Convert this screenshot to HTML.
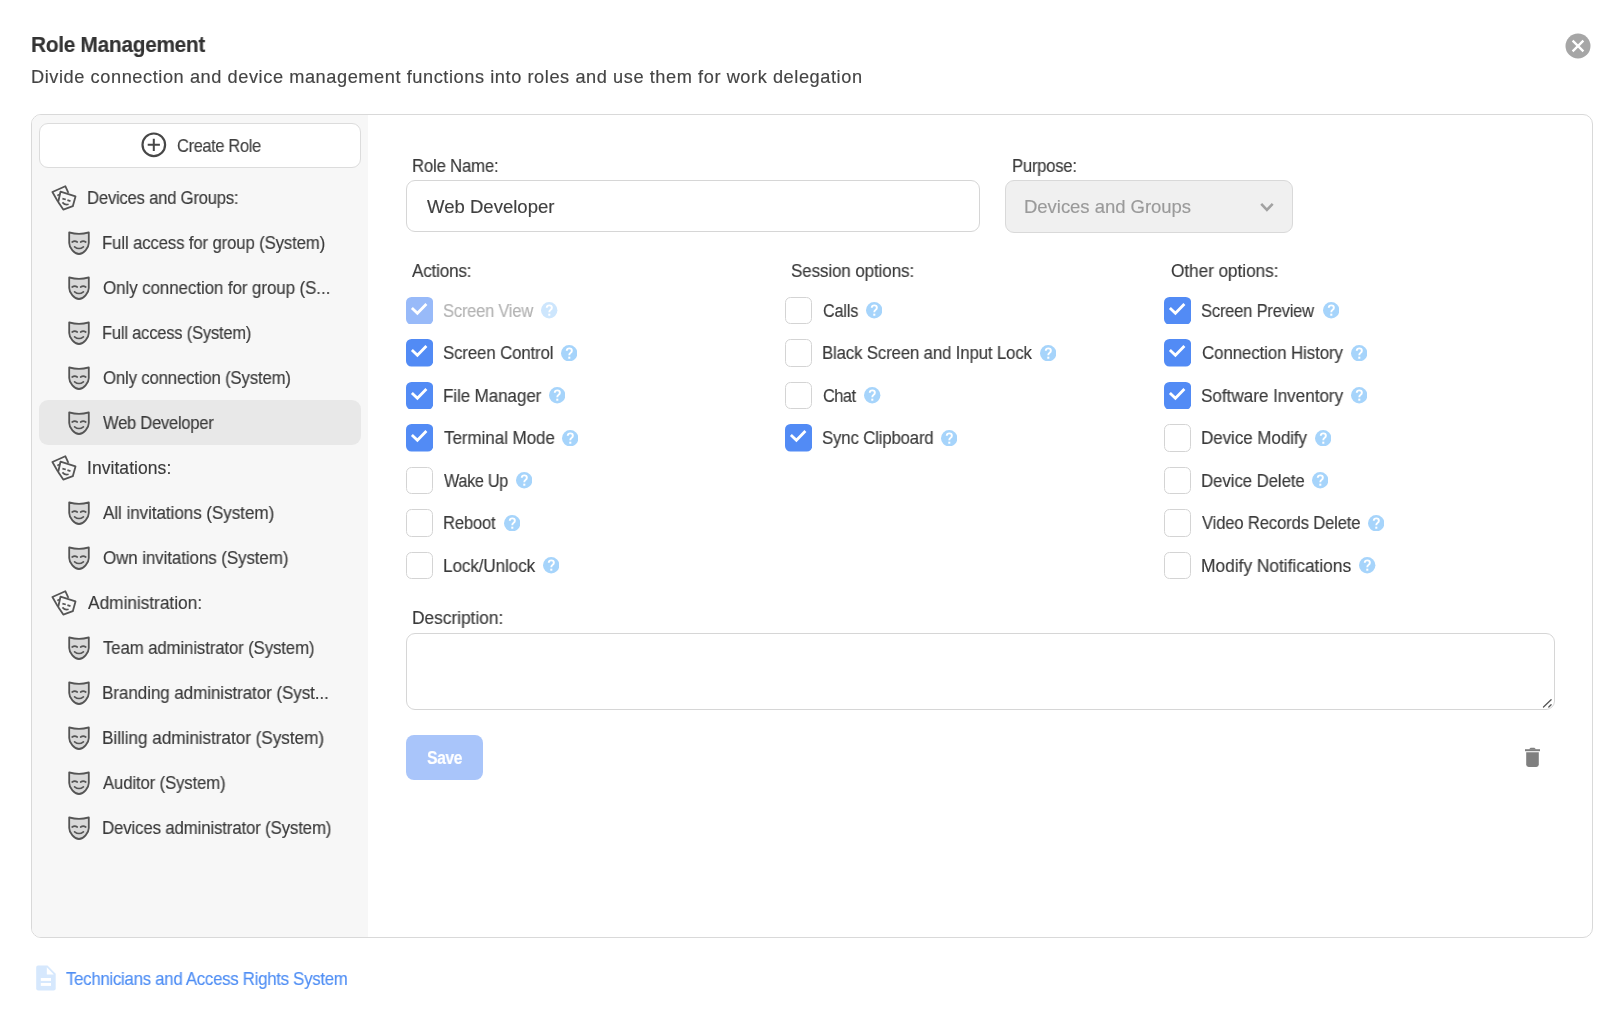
<!DOCTYPE html>
<html><head><meta charset='utf-8'><style>
html,body{margin:0;padding:0;background:#fff;width:1624px;height:1024px;overflow:hidden;position:relative;font-family:"Liberation Sans", sans-serif;}
.t{position:absolute;white-space:pre;will-change:transform;transform-origin:0 0;-webkit-text-stroke:0.15px currentColor;font-family:"Liberation Sans", sans-serif;}
.ic{position:absolute;display:block;}
.box{position:absolute;left:31px;top:114px;width:1560px;height:822px;border:1px solid #d9d9d9;border-radius:10px;overflow:hidden;background:#fff;}
.side{position:absolute;left:0;top:0;width:336px;height:822px;background:#f7f7f7;}
.create{position:absolute;left:39px;top:123px;width:320px;height:43px;border:1px solid #dcdcdc;border-radius:9px;background:#fff;}
.sel{position:absolute;left:39px;top:400px;width:322px;height:44.5px;border-radius:9px;background:#e8e8e8;}
.inp{position:absolute;left:406px;top:180px;width:572px;height:50px;border:1px solid #d6d6d6;border-radius:9px;background:#fff;}
.select{position:absolute;left:1005px;top:180px;width:286px;height:51px;border:1px solid #d9d9d9;border-radius:9px;background:#f0f0f0;}
.cb{position:absolute;width:25px;height:25.5px;border:1px solid #d4d4d4;border-radius:5.5px;background:#fff;}
.ta{position:absolute;left:406px;top:633px;width:1147px;height:75px;border:1px solid #d6d6d6;border-radius:9px;background:#fff;}
.save{position:absolute;left:406px;top:735px;width:77px;height:44.5px;border-radius:8px;background:#a9c5fa;}
</style></head><body>
<div class='box'><div class='side'></div></div>
<div class='create'></div>
<div class='sel'></div>
<div class='inp'></div>
<div class='select'></div>
<div class='ta'></div>
<div class='save'></div>
<svg class='ic' style='left:1565px;top:33px' width='26' height='26' viewBox='0 0 26 26'><circle cx='13' cy='13' r='12.5' fill='#a6a6a6'/><path d='M7.6,7.6 L18.4,18.4 M18.4,7.6 L7.6,18.4' stroke='#fff' stroke-width='2.3'/></svg>
<svg class='ic' style='left:141.2px;top:131.85px' width='26' height='26' viewBox='0 0 26 26'><circle cx='12.8' cy='12.8' r='11.3' fill='none' stroke='#474747' stroke-width='2.2'/><path d='M12.8,6.7 V18.9 M6.7,12.8 H18.9' stroke='#474747' stroke-width='2.0'/></svg>
<svg class='ic' style='left:1258px;top:200px' width='18' height='14' viewBox='0 0 18 14'><path d='M3.2,3.9 L8.9,9.9 L14.7,3.9' fill='none' stroke='#a2a2a2' stroke-width='2.6'/></svg>
<svg class='ic' style='left:1539px;top:697px' width='14' height='12' viewBox='0 0 14 12'><path d='M4.5,10 L12.1,2.8 M9.8,10 L12.1,7.8' stroke='#555' stroke-width='1.3' stroke-linecap='round'/></svg>
<svg class='ic' style='left:1524px;top:747px' width='17' height='21' viewBox='0 0 17 21'><rect x='1' y='2.2' width='15' height='2' fill='#7f7f7f'/><path d='M4.8,2.6 L6.6,0.8 H10.4 L12.2,2.6 Z' fill='#7f7f7f'/><path d='M2.2,5.2 H14.8 V17.6 Q14.8,20 12.4,20 H4.6 Q2.2,20 2.2,17.6 Z' fill='#7f7f7f'/></svg>
<svg class='ic' style='left:36px;top:965px' width='20' height='26' viewBox='0 0 20 26'><path d='M2,0.5 H11.5 L19.7,8.7 V23.5 Q19.7,25.5 17.7,25.5 H2.2 Q0.2,25.5 0.2,23.5 V2.5 Q0.2,0.5 2,0.5 Z' fill='#d6e8fd'/><path d='M10.8,2.3 V9.5 H17.8 Z' fill='#fff'/><rect x='4.8' y='13' width='10.2' height='2.9' fill='#fff'/><rect x='4.8' y='18' width='10.2' height='2.9' fill='#fff'/></svg>
<svg class='ic' style='left:0px;top:0.0px' width='90' height='220' viewBox='0 0 90 220'><path d='M57.9,201.6 L52.4,192 L65.3,186.2 L68.4,192.8' fill='none' stroke='#555' stroke-width='1.8' stroke-linejoin='round'/><path d='M57.3,195.6 L60.3,194.3' fill='none' stroke='#555' stroke-width='1.6'/><path d='M60.5,191.7 L75.5,196.4 L72.8,206.2 L63.3,209.6 L58.2,202 Z' fill='#f7f7f7' stroke='#555' stroke-width='1.8' stroke-linejoin='round'/><path d='M62.4,198.6 L65.8,199.5 M67.4,200.1 L70.5,201.1 M62.4,202.4 Q65.2,205.6 68.6,204.3' fill='none' stroke='#555' stroke-width='1.7'/></svg><svg class='ic' style='left:68px;top:231.0px' width='22' height='24' viewBox='0 0 22 24'><path d='M1.2,1.3 Q11,4.3 20.8,1.3 L20.8,12 C20.8,17 15.5,23 11,23 C6.5,23 1.2,17 1.2,12 Z' fill='#d9d9d9' stroke='#555' stroke-width='1.8' stroke-linejoin='round'/><path d='M4.2,11.0 Q6.7,9.4 9.2,11.0 M12.7,11.0 Q15.2,9.4 17.7,11.0 M6.6,15.8 Q11,19.2 15.4,15.8' fill='none' stroke='#555' stroke-width='1.7' stroke-linecap='round'/></svg><svg class='ic' style='left:68px;top:276.0px' width='22' height='24' viewBox='0 0 22 24'><path d='M1.2,1.3 Q11,4.3 20.8,1.3 L20.8,12 C20.8,17 15.5,23 11,23 C6.5,23 1.2,17 1.2,12 Z' fill='#d9d9d9' stroke='#555' stroke-width='1.8' stroke-linejoin='round'/><path d='M4.2,11.0 Q6.7,9.4 9.2,11.0 M12.7,11.0 Q15.2,9.4 17.7,11.0 M6.6,15.8 Q11,19.2 15.4,15.8' fill='none' stroke='#555' stroke-width='1.7' stroke-linecap='round'/></svg><svg class='ic' style='left:68px;top:321.0px' width='22' height='24' viewBox='0 0 22 24'><path d='M1.2,1.3 Q11,4.3 20.8,1.3 L20.8,12 C20.8,17 15.5,23 11,23 C6.5,23 1.2,17 1.2,12 Z' fill='#d9d9d9' stroke='#555' stroke-width='1.8' stroke-linejoin='round'/><path d='M4.2,11.0 Q6.7,9.4 9.2,11.0 M12.7,11.0 Q15.2,9.4 17.7,11.0 M6.6,15.8 Q11,19.2 15.4,15.8' fill='none' stroke='#555' stroke-width='1.7' stroke-linecap='round'/></svg><svg class='ic' style='left:68px;top:366.0px' width='22' height='24' viewBox='0 0 22 24'><path d='M1.2,1.3 Q11,4.3 20.8,1.3 L20.8,12 C20.8,17 15.5,23 11,23 C6.5,23 1.2,17 1.2,12 Z' fill='#d9d9d9' stroke='#555' stroke-width='1.8' stroke-linejoin='round'/><path d='M4.2,11.0 Q6.7,9.4 9.2,11.0 M12.7,11.0 Q15.2,9.4 17.7,11.0 M6.6,15.8 Q11,19.2 15.4,15.8' fill='none' stroke='#555' stroke-width='1.7' stroke-linecap='round'/></svg><svg class='ic' style='left:68px;top:411.0px' width='22' height='24' viewBox='0 0 22 24'><path d='M1.2,1.3 Q11,4.3 20.8,1.3 L20.8,12 C20.8,17 15.5,23 11,23 C6.5,23 1.2,17 1.2,12 Z' fill='#d9d9d9' stroke='#555' stroke-width='1.8' stroke-linejoin='round'/><path d='M4.2,11.0 Q6.7,9.4 9.2,11.0 M12.7,11.0 Q15.2,9.4 17.7,11.0 M6.6,15.8 Q11,19.2 15.4,15.8' fill='none' stroke='#555' stroke-width='1.7' stroke-linecap='round'/></svg><svg class='ic' style='left:0px;top:270.0px' width='90' height='220' viewBox='0 0 90 220'><path d='M57.9,201.6 L52.4,192 L65.3,186.2 L68.4,192.8' fill='none' stroke='#555' stroke-width='1.8' stroke-linejoin='round'/><path d='M57.3,195.6 L60.3,194.3' fill='none' stroke='#555' stroke-width='1.6'/><path d='M60.5,191.7 L75.5,196.4 L72.8,206.2 L63.3,209.6 L58.2,202 Z' fill='#f7f7f7' stroke='#555' stroke-width='1.8' stroke-linejoin='round'/><path d='M62.4,198.6 L65.8,199.5 M67.4,200.1 L70.5,201.1 M62.4,202.4 Q65.2,205.6 68.6,204.3' fill='none' stroke='#555' stroke-width='1.7'/></svg><svg class='ic' style='left:68px;top:501.0px' width='22' height='24' viewBox='0 0 22 24'><path d='M1.2,1.3 Q11,4.3 20.8,1.3 L20.8,12 C20.8,17 15.5,23 11,23 C6.5,23 1.2,17 1.2,12 Z' fill='#d9d9d9' stroke='#555' stroke-width='1.8' stroke-linejoin='round'/><path d='M4.2,11.0 Q6.7,9.4 9.2,11.0 M12.7,11.0 Q15.2,9.4 17.7,11.0 M6.6,15.8 Q11,19.2 15.4,15.8' fill='none' stroke='#555' stroke-width='1.7' stroke-linecap='round'/></svg><svg class='ic' style='left:68px;top:546.0px' width='22' height='24' viewBox='0 0 22 24'><path d='M1.2,1.3 Q11,4.3 20.8,1.3 L20.8,12 C20.8,17 15.5,23 11,23 C6.5,23 1.2,17 1.2,12 Z' fill='#d9d9d9' stroke='#555' stroke-width='1.8' stroke-linejoin='round'/><path d='M4.2,11.0 Q6.7,9.4 9.2,11.0 M12.7,11.0 Q15.2,9.4 17.7,11.0 M6.6,15.8 Q11,19.2 15.4,15.8' fill='none' stroke='#555' stroke-width='1.7' stroke-linecap='round'/></svg><svg class='ic' style='left:0px;top:405.0px' width='90' height='220' viewBox='0 0 90 220'><path d='M57.9,201.6 L52.4,192 L65.3,186.2 L68.4,192.8' fill='none' stroke='#555' stroke-width='1.8' stroke-linejoin='round'/><path d='M57.3,195.6 L60.3,194.3' fill='none' stroke='#555' stroke-width='1.6'/><path d='M60.5,191.7 L75.5,196.4 L72.8,206.2 L63.3,209.6 L58.2,202 Z' fill='#f7f7f7' stroke='#555' stroke-width='1.8' stroke-linejoin='round'/><path d='M62.4,198.6 L65.8,199.5 M67.4,200.1 L70.5,201.1 M62.4,202.4 Q65.2,205.6 68.6,204.3' fill='none' stroke='#555' stroke-width='1.7'/></svg><svg class='ic' style='left:68px;top:636.0px' width='22' height='24' viewBox='0 0 22 24'><path d='M1.2,1.3 Q11,4.3 20.8,1.3 L20.8,12 C20.8,17 15.5,23 11,23 C6.5,23 1.2,17 1.2,12 Z' fill='#d9d9d9' stroke='#555' stroke-width='1.8' stroke-linejoin='round'/><path d='M4.2,11.0 Q6.7,9.4 9.2,11.0 M12.7,11.0 Q15.2,9.4 17.7,11.0 M6.6,15.8 Q11,19.2 15.4,15.8' fill='none' stroke='#555' stroke-width='1.7' stroke-linecap='round'/></svg><svg class='ic' style='left:68px;top:681.0px' width='22' height='24' viewBox='0 0 22 24'><path d='M1.2,1.3 Q11,4.3 20.8,1.3 L20.8,12 C20.8,17 15.5,23 11,23 C6.5,23 1.2,17 1.2,12 Z' fill='#d9d9d9' stroke='#555' stroke-width='1.8' stroke-linejoin='round'/><path d='M4.2,11.0 Q6.7,9.4 9.2,11.0 M12.7,11.0 Q15.2,9.4 17.7,11.0 M6.6,15.8 Q11,19.2 15.4,15.8' fill='none' stroke='#555' stroke-width='1.7' stroke-linecap='round'/></svg><svg class='ic' style='left:68px;top:726.0px' width='22' height='24' viewBox='0 0 22 24'><path d='M1.2,1.3 Q11,4.3 20.8,1.3 L20.8,12 C20.8,17 15.5,23 11,23 C6.5,23 1.2,17 1.2,12 Z' fill='#d9d9d9' stroke='#555' stroke-width='1.8' stroke-linejoin='round'/><path d='M4.2,11.0 Q6.7,9.4 9.2,11.0 M12.7,11.0 Q15.2,9.4 17.7,11.0 M6.6,15.8 Q11,19.2 15.4,15.8' fill='none' stroke='#555' stroke-width='1.7' stroke-linecap='round'/></svg><svg class='ic' style='left:68px;top:771.0px' width='22' height='24' viewBox='0 0 22 24'><path d='M1.2,1.3 Q11,4.3 20.8,1.3 L20.8,12 C20.8,17 15.5,23 11,23 C6.5,23 1.2,17 1.2,12 Z' fill='#d9d9d9' stroke='#555' stroke-width='1.8' stroke-linejoin='round'/><path d='M4.2,11.0 Q6.7,9.4 9.2,11.0 M12.7,11.0 Q15.2,9.4 17.7,11.0 M6.6,15.8 Q11,19.2 15.4,15.8' fill='none' stroke='#555' stroke-width='1.7' stroke-linecap='round'/></svg><svg class='ic' style='left:68px;top:816.0px' width='22' height='24' viewBox='0 0 22 24'><path d='M1.2,1.3 Q11,4.3 20.8,1.3 L20.8,12 C20.8,17 15.5,23 11,23 C6.5,23 1.2,17 1.2,12 Z' fill='#d9d9d9' stroke='#555' stroke-width='1.8' stroke-linejoin='round'/><path d='M4.2,11.0 Q6.7,9.4 9.2,11.0 M12.7,11.0 Q15.2,9.4 17.7,11.0 M6.6,15.8 Q11,19.2 15.4,15.8' fill='none' stroke='#555' stroke-width='1.7' stroke-linecap='round'/></svg>
<svg class='ic' style='left:406.2px;top:296.8px' width='27.3' height='27.5' viewBox='0 0 27.3 27.5'><rect x='0' y='0' width='27.3' height='27.5' rx='5.5' fill='#98baf9'/><path d='M5.9,11.0 L11.4,16.2 L20.4,7.1' fill='none' stroke='#fff' stroke-width='2.8' stroke-linecap='butt'/></svg><svg class='ic' style='left:406.2px;top:339.3px' width='27.3' height='27.5' viewBox='0 0 27.3 27.5'><rect x='0' y='0' width='27.3' height='27.5' rx='5.5' fill='#528bf5'/><path d='M5.9,11.0 L11.4,16.2 L20.4,7.1' fill='none' stroke='#fff' stroke-width='2.8' stroke-linecap='butt'/></svg><svg class='ic' style='left:406.2px;top:381.8px' width='27.3' height='27.5' viewBox='0 0 27.3 27.5'><rect x='0' y='0' width='27.3' height='27.5' rx='5.5' fill='#528bf5'/><path d='M5.9,11.0 L11.4,16.2 L20.4,7.1' fill='none' stroke='#fff' stroke-width='2.8' stroke-linecap='butt'/></svg><svg class='ic' style='left:406.2px;top:424.3px' width='27.3' height='27.5' viewBox='0 0 27.3 27.5'><rect x='0' y='0' width='27.3' height='27.5' rx='5.5' fill='#528bf5'/><path d='M5.9,11.0 L11.4,16.2 L20.4,7.1' fill='none' stroke='#fff' stroke-width='2.8' stroke-linecap='butt'/></svg><div class='cb' style='left:406.2px;top:466.8px'></div><div class='cb' style='left:406.2px;top:509.3px'></div><div class='cb' style='left:406.2px;top:551.8px'></div><div class='cb' style='left:785.2px;top:296.8px'></div><div class='cb' style='left:785.2px;top:339.3px'></div><div class='cb' style='left:785.2px;top:381.8px'></div><svg class='ic' style='left:785.2px;top:424.3px' width='27.3' height='27.5' viewBox='0 0 27.3 27.5'><rect x='0' y='0' width='27.3' height='27.5' rx='5.5' fill='#528bf5'/><path d='M5.9,11.0 L11.4,16.2 L20.4,7.1' fill='none' stroke='#fff' stroke-width='2.8' stroke-linecap='butt'/></svg><svg class='ic' style='left:1164.2px;top:296.8px' width='27.3' height='27.5' viewBox='0 0 27.3 27.5'><rect x='0' y='0' width='27.3' height='27.5' rx='5.5' fill='#528bf5'/><path d='M5.9,11.0 L11.4,16.2 L20.4,7.1' fill='none' stroke='#fff' stroke-width='2.8' stroke-linecap='butt'/></svg><svg class='ic' style='left:1164.2px;top:339.3px' width='27.3' height='27.5' viewBox='0 0 27.3 27.5'><rect x='0' y='0' width='27.3' height='27.5' rx='5.5' fill='#528bf5'/><path d='M5.9,11.0 L11.4,16.2 L20.4,7.1' fill='none' stroke='#fff' stroke-width='2.8' stroke-linecap='butt'/></svg><svg class='ic' style='left:1164.2px;top:381.8px' width='27.3' height='27.5' viewBox='0 0 27.3 27.5'><rect x='0' y='0' width='27.3' height='27.5' rx='5.5' fill='#528bf5'/><path d='M5.9,11.0 L11.4,16.2 L20.4,7.1' fill='none' stroke='#fff' stroke-width='2.8' stroke-linecap='butt'/></svg><div class='cb' style='left:1164.2px;top:424.3px'></div><div class='cb' style='left:1164.2px;top:466.8px'></div><div class='cb' style='left:1164.2px;top:509.3px'></div><div class='cb' style='left:1164.2px;top:551.8px'></div>
<svg class='ic' style='left:541.3px;top:302.2px' width='16.4' height='16.4' viewBox='0 0 16 16'><circle cx='8' cy='8' r='8' fill='#cde6fd'/><path d='M5.6,5.6 Q5.8,3.3 8.1,3.3 Q10.6,3.3 10.6,5.6 Q10.6,7 9.2,7.8 Q8.1,8.5 8.1,10' fill='none' stroke='#fff' stroke-width='1.9'/><rect x='7.1' y='11.4' width='2' height='2' fill='#fff'/></svg><svg class='ic' style='left:560.8px;top:344.7px' width='16.4' height='16.4' viewBox='0 0 16 16'><circle cx='8' cy='8' r='8' fill='#a6d4fb'/><path d='M5.6,5.6 Q5.8,3.3 8.1,3.3 Q10.6,3.3 10.6,5.6 Q10.6,7 9.2,7.8 Q8.1,8.5 8.1,10' fill='none' stroke='#fff' stroke-width='1.9'/><rect x='7.1' y='11.4' width='2' height='2' fill='#fff'/></svg><svg class='ic' style='left:548.8px;top:387.2px' width='16.4' height='16.4' viewBox='0 0 16 16'><circle cx='8' cy='8' r='8' fill='#a6d4fb'/><path d='M5.6,5.6 Q5.8,3.3 8.1,3.3 Q10.6,3.3 10.6,5.6 Q10.6,7 9.2,7.8 Q8.1,8.5 8.1,10' fill='none' stroke='#fff' stroke-width='1.9'/><rect x='7.1' y='11.4' width='2' height='2' fill='#fff'/></svg><svg class='ic' style='left:561.8px;top:429.7px' width='16.4' height='16.4' viewBox='0 0 16 16'><circle cx='8' cy='8' r='8' fill='#a6d4fb'/><path d='M5.6,5.6 Q5.8,3.3 8.1,3.3 Q10.6,3.3 10.6,5.6 Q10.6,7 9.2,7.8 Q8.1,8.5 8.1,10' fill='none' stroke='#fff' stroke-width='1.9'/><rect x='7.1' y='11.4' width='2' height='2' fill='#fff'/></svg><svg class='ic' style='left:515.5px;top:472.2px' width='16.4' height='16.4' viewBox='0 0 16 16'><circle cx='8' cy='8' r='8' fill='#a6d4fb'/><path d='M5.6,5.6 Q5.8,3.3 8.1,3.3 Q10.6,3.3 10.6,5.6 Q10.6,7 9.2,7.8 Q8.1,8.5 8.1,10' fill='none' stroke='#fff' stroke-width='1.9'/><rect x='7.1' y='11.4' width='2' height='2' fill='#fff'/></svg><svg class='ic' style='left:503.8px;top:514.7px' width='16.4' height='16.4' viewBox='0 0 16 16'><circle cx='8' cy='8' r='8' fill='#a6d4fb'/><path d='M5.6,5.6 Q5.8,3.3 8.1,3.3 Q10.6,3.3 10.6,5.6 Q10.6,7 9.2,7.8 Q8.1,8.5 8.1,10' fill='none' stroke='#fff' stroke-width='1.9'/><rect x='7.1' y='11.4' width='2' height='2' fill='#fff'/></svg><svg class='ic' style='left:542.8px;top:557.2px' width='16.4' height='16.4' viewBox='0 0 16 16'><circle cx='8' cy='8' r='8' fill='#a6d4fb'/><path d='M5.6,5.6 Q5.8,3.3 8.1,3.3 Q10.6,3.3 10.6,5.6 Q10.6,7 9.2,7.8 Q8.1,8.5 8.1,10' fill='none' stroke='#fff' stroke-width='1.9'/><rect x='7.1' y='11.4' width='2' height='2' fill='#fff'/></svg><svg class='ic' style='left:865.6px;top:302.2px' width='16.4' height='16.4' viewBox='0 0 16 16'><circle cx='8' cy='8' r='8' fill='#a6d4fb'/><path d='M5.6,5.6 Q5.8,3.3 8.1,3.3 Q10.6,3.3 10.6,5.6 Q10.6,7 9.2,7.8 Q8.1,8.5 8.1,10' fill='none' stroke='#fff' stroke-width='1.9'/><rect x='7.1' y='11.4' width='2' height='2' fill='#fff'/></svg><svg class='ic' style='left:1039.6px;top:344.7px' width='16.4' height='16.4' viewBox='0 0 16 16'><circle cx='8' cy='8' r='8' fill='#a6d4fb'/><path d='M5.6,5.6 Q5.8,3.3 8.1,3.3 Q10.6,3.3 10.6,5.6 Q10.6,7 9.2,7.8 Q8.1,8.5 8.1,10' fill='none' stroke='#fff' stroke-width='1.9'/><rect x='7.1' y='11.4' width='2' height='2' fill='#fff'/></svg><svg class='ic' style='left:864.3px;top:387.2px' width='16.4' height='16.4' viewBox='0 0 16 16'><circle cx='8' cy='8' r='8' fill='#a6d4fb'/><path d='M5.6,5.6 Q5.8,3.3 8.1,3.3 Q10.6,3.3 10.6,5.6 Q10.6,7 9.2,7.8 Q8.1,8.5 8.1,10' fill='none' stroke='#fff' stroke-width='1.9'/><rect x='7.1' y='11.4' width='2' height='2' fill='#fff'/></svg><svg class='ic' style='left:940.8px;top:429.7px' width='16.4' height='16.4' viewBox='0 0 16 16'><circle cx='8' cy='8' r='8' fill='#a6d4fb'/><path d='M5.6,5.6 Q5.8,3.3 8.1,3.3 Q10.6,3.3 10.6,5.6 Q10.6,7 9.2,7.8 Q8.1,8.5 8.1,10' fill='none' stroke='#fff' stroke-width='1.9'/><rect x='7.1' y='11.4' width='2' height='2' fill='#fff'/></svg><svg class='ic' style='left:1322.5px;top:302.2px' width='16.4' height='16.4' viewBox='0 0 16 16'><circle cx='8' cy='8' r='8' fill='#a6d4fb'/><path d='M5.6,5.6 Q5.8,3.3 8.1,3.3 Q10.6,3.3 10.6,5.6 Q10.6,7 9.2,7.8 Q8.1,8.5 8.1,10' fill='none' stroke='#fff' stroke-width='1.9'/><rect x='7.1' y='11.4' width='2' height='2' fill='#fff'/></svg><svg class='ic' style='left:1350.8px;top:344.7px' width='16.4' height='16.4' viewBox='0 0 16 16'><circle cx='8' cy='8' r='8' fill='#a6d4fb'/><path d='M5.6,5.6 Q5.8,3.3 8.1,3.3 Q10.6,3.3 10.6,5.6 Q10.6,7 9.2,7.8 Q8.1,8.5 8.1,10' fill='none' stroke='#fff' stroke-width='1.9'/><rect x='7.1' y='11.4' width='2' height='2' fill='#fff'/></svg><svg class='ic' style='left:1350.8px;top:387.2px' width='16.4' height='16.4' viewBox='0 0 16 16'><circle cx='8' cy='8' r='8' fill='#a6d4fb'/><path d='M5.6,5.6 Q5.8,3.3 8.1,3.3 Q10.6,3.3 10.6,5.6 Q10.6,7 9.2,7.8 Q8.1,8.5 8.1,10' fill='none' stroke='#fff' stroke-width='1.9'/><rect x='7.1' y='11.4' width='2' height='2' fill='#fff'/></svg><svg class='ic' style='left:1314.8px;top:429.7px' width='16.4' height='16.4' viewBox='0 0 16 16'><circle cx='8' cy='8' r='8' fill='#a6d4fb'/><path d='M5.6,5.6 Q5.8,3.3 8.1,3.3 Q10.6,3.3 10.6,5.6 Q10.6,7 9.2,7.8 Q8.1,8.5 8.1,10' fill='none' stroke='#fff' stroke-width='1.9'/><rect x='7.1' y='11.4' width='2' height='2' fill='#fff'/></svg><svg class='ic' style='left:1312.1px;top:472.2px' width='16.4' height='16.4' viewBox='0 0 16 16'><circle cx='8' cy='8' r='8' fill='#a6d4fb'/><path d='M5.6,5.6 Q5.8,3.3 8.1,3.3 Q10.6,3.3 10.6,5.6 Q10.6,7 9.2,7.8 Q8.1,8.5 8.1,10' fill='none' stroke='#fff' stroke-width='1.9'/><rect x='7.1' y='11.4' width='2' height='2' fill='#fff'/></svg><svg class='ic' style='left:1367.8px;top:514.7px' width='16.4' height='16.4' viewBox='0 0 16 16'><circle cx='8' cy='8' r='8' fill='#a6d4fb'/><path d='M5.6,5.6 Q5.8,3.3 8.1,3.3 Q10.6,3.3 10.6,5.6 Q10.6,7 9.2,7.8 Q8.1,8.5 8.1,10' fill='none' stroke='#fff' stroke-width='1.9'/><rect x='7.1' y='11.4' width='2' height='2' fill='#fff'/></svg><svg class='ic' style='left:1359.3px;top:557.2px' width='16.4' height='16.4' viewBox='0 0 16 16'><circle cx='8' cy='8' r='8' fill='#a6d4fb'/><path d='M5.6,5.6 Q5.8,3.3 8.1,3.3 Q10.6,3.3 10.6,5.6 Q10.6,7 9.2,7.8 Q8.1,8.5 8.1,10' fill='none' stroke='#fff' stroke-width='1.9'/><rect x='7.1' y='11.4' width='2' height='2' fill='#fff'/></svg>
<div class='t' style='left:30.50px;top:34.00px;font-size:22.2px;line-height:22.2px;font-weight:700;color:#333333;letter-spacing:-0.334px;transform:scaleX(0.9415)'>Role Management</div><div class='t' style='left:31.00px;top:68.00px;font-size:18.2px;line-height:18.2px;font-weight:400;color:#444444;letter-spacing:0.571px'>Divide connection and device management functions into roles and use them for work delegation</div><div class='t' style='left:176.50px;top:138.00px;font-size:17.7px;line-height:17.7px;font-weight:400;color:#404040;letter-spacing:-0.377px;transform:scaleX(0.9293)'>Create Role</div><div class='t' style='left:86.50px;top:190.00px;font-size:17.5px;line-height:17.5px;font-weight:400;color:#3a3a3a;letter-spacing:-0.233px;transform:scaleX(0.9522)'>Devices and Groups:</div><div class='t' style='left:101.50px;top:235.00px;font-size:17.5px;line-height:17.5px;font-weight:400;color:#3a3a3a;letter-spacing:-0.137px;transform:scaleX(0.9567)'>Full access for group (System)</div><div class='t' style='left:102.50px;top:280.00px;font-size:17.5px;line-height:17.5px;font-weight:400;color:#3a3a3a;letter-spacing:-0.103px;transform:scaleX(0.9703)'>Only connection for group (S...</div><div class='t' style='left:101.50px;top:325.00px;font-size:17.5px;line-height:17.5px;font-weight:400;color:#3a3a3a;letter-spacing:-0.196px;transform:scaleX(0.9413)'>Full access (System)</div><div class='t' style='left:102.50px;top:370.00px;font-size:17.5px;line-height:17.5px;font-weight:400;color:#3a3a3a;letter-spacing:-0.182px;transform:scaleX(0.9580)'>Only connection (System)</div><div class='t' style='left:102.50px;top:415.00px;font-size:17.5px;line-height:17.5px;font-weight:400;color:#3a3a3a;letter-spacing:-0.299px;transform:scaleX(0.9487)'>Web Developer</div><div class='t' style='left:86.50px;top:460.00px;font-size:17.5px;line-height:17.5px;font-weight:400;color:#3a3a3a;letter-spacing:0.055px'>Invitations:</div><div class='t' style='left:102.50px;top:505.00px;font-size:17.5px;line-height:17.5px;font-weight:400;color:#3a3a3a;letter-spacing:-0.106px;transform:scaleX(0.9809)'>All invitations (System)</div><div class='t' style='left:102.50px;top:550.00px;font-size:17.5px;line-height:17.5px;font-weight:400;color:#3a3a3a;letter-spacing:-0.099px;transform:scaleX(0.9695)'>Own invitations (System)</div><div class='t' style='left:87.50px;top:595.00px;font-size:17.5px;line-height:17.5px;font-weight:400;color:#3a3a3a;letter-spacing:-0.029px;transform:scaleX(0.9890)'>Administration:</div><div class='t' style='left:102.50px;top:640.00px;font-size:17.5px;line-height:17.5px;font-weight:400;color:#3a3a3a;letter-spacing:-0.144px;transform:scaleX(0.9617)'>Team administrator (System)</div><div class='t' style='left:101.50px;top:685.00px;font-size:17.5px;line-height:17.5px;font-weight:400;color:#3a3a3a;letter-spacing:-0.106px;transform:scaleX(0.9769)'>Branding administrator (Syst...</div><div class='t' style='left:101.50px;top:730.00px;font-size:17.5px;line-height:17.5px;font-weight:400;color:#3a3a3a;letter-spacing:-0.070px;transform:scaleX(0.9845)'>Billing administrator (System)</div><div class='t' style='left:102.50px;top:775.00px;font-size:17.5px;line-height:17.5px;font-weight:400;color:#3a3a3a;letter-spacing:-0.133px;transform:scaleX(0.9553)'>Auditor (System)</div><div class='t' style='left:101.50px;top:820.00px;font-size:17.5px;line-height:17.5px;font-weight:400;color:#3a3a3a;letter-spacing:-0.172px;transform:scaleX(0.9634)'>Devices administrator (System)</div><div class='t' style='left:411.90px;top:158.00px;font-size:17.5px;line-height:17.5px;font-weight:400;color:#3a3a3a;letter-spacing:-0.209px;transform:scaleX(0.9564)'>Role Name:</div><div class='t' style='left:1011.50px;top:158.00px;font-size:17.5px;line-height:17.5px;font-weight:400;color:#3a3a3a;letter-spacing:-0.256px;transform:scaleX(0.9496)'>Purpose:</div><div class='t' style='left:427.30px;top:198.00px;font-size:18.5px;line-height:18.5px;font-weight:400;color:#404040;letter-spacing:0.025px'>Web Developer</div><div class='t' style='left:1023.50px;top:198.00px;font-size:18.5px;line-height:18.5px;font-weight:400;color:#9a9a9a;letter-spacing:-0.029px;transform:scaleX(0.9979)'>Devices and Groups</div><div class='t' style='left:412.30px;top:263.00px;font-size:17.5px;line-height:17.5px;font-weight:400;color:#3a3a3a;letter-spacing:-0.190px;transform:scaleX(0.9759)'>Actions:</div><div class='t' style='left:790.80px;top:263.00px;font-size:17.5px;line-height:17.5px;font-weight:400;color:#3a3a3a;letter-spacing:-0.110px;transform:scaleX(0.9711)'>Session options:</div><div class='t' style='left:1170.80px;top:263.00px;font-size:17.5px;line-height:17.5px;font-weight:400;color:#3a3a3a;letter-spacing:-0.070px;transform:scaleX(0.9852)'>Other options:</div><div class='t' style='left:411.70px;top:610.00px;font-size:17.5px;line-height:17.5px;font-weight:400;color:#3a3a3a;letter-spacing:-0.028px;transform:scaleX(0.9914)'>Description:</div><div class='t' style='left:427.00px;top:750.00px;font-size:17.5px;line-height:17.5px;font-weight:700;color:#ffffff;letter-spacing:-0.484px;transform:scaleX(0.8959)'>Save</div><div class='t' style='left:66.00px;top:970.00px;font-size:18.2px;line-height:18.2px;font-weight:400;color:#4f8ef4;letter-spacing:-0.297px;transform:scaleX(0.9240)'>Technicians and Access Rights System</div><div class='t' style='left:443.00px;top:303.00px;font-size:17.5px;line-height:17.5px;font-weight:400;color:#b3b3b3;letter-spacing:-0.264px;transform:scaleX(0.9459)'>Screen View</div><div class='t' style='left:443.00px;top:345.00px;font-size:17.5px;line-height:17.5px;font-weight:400;color:#3a3a3a;letter-spacing:-0.160px;transform:scaleX(0.9635)'>Screen Control</div><div class='t' style='left:443.00px;top:388.00px;font-size:17.5px;line-height:17.5px;font-weight:400;color:#3a3a3a;letter-spacing:-0.094px;transform:scaleX(0.9723)'>File Manager</div><div class='t' style='left:444.00px;top:430.00px;font-size:17.5px;line-height:17.5px;font-weight:400;color:#3a3a3a;letter-spacing:-0.085px;transform:scaleX(0.9754)'>Terminal Mode</div><div class='t' style='left:444.00px;top:473.00px;font-size:17.5px;line-height:17.5px;font-weight:400;color:#3a3a3a;letter-spacing:-0.341px;transform:scaleX(0.9280)'>Wake Up</div><div class='t' style='left:443.00px;top:515.00px;font-size:17.5px;line-height:17.5px;font-weight:400;color:#3a3a3a;letter-spacing:-0.211px;transform:scaleX(0.9500)'>Reboot</div><div class='t' style='left:443.00px;top:558.00px;font-size:17.5px;line-height:17.5px;font-weight:400;color:#3a3a3a;letter-spacing:-0.102px;transform:scaleX(0.9777)'>Lock/Unlock</div><div class='t' style='left:823.00px;top:303.00px;font-size:17.5px;line-height:17.5px;font-weight:400;color:#3a3a3a;letter-spacing:-0.162px;transform:scaleX(0.9246)'>Calls</div><div class='t' style='left:822.00px;top:345.00px;font-size:17.5px;line-height:17.5px;font-weight:400;color:#3a3a3a;letter-spacing:-0.144px;transform:scaleX(0.9584)'>Black Screen and Input Lock</div><div class='t' style='left:823.00px;top:388.00px;font-size:17.5px;line-height:17.5px;font-weight:400;color:#3a3a3a;letter-spacing:-0.535px;transform:scaleX(0.9338)'>Chat</div><div class='t' style='left:822.00px;top:430.00px;font-size:17.5px;line-height:17.5px;font-weight:400;color:#3a3a3a;letter-spacing:-0.161px;transform:scaleX(0.9581)'>Sync Clipboard</div><div class='t' style='left:1201.00px;top:303.00px;font-size:17.5px;line-height:17.5px;font-weight:400;color:#3a3a3a;letter-spacing:-0.236px;transform:scaleX(0.9466)'>Screen Preview</div><div class='t' style='left:1202.00px;top:345.00px;font-size:17.5px;line-height:17.5px;font-weight:400;color:#3a3a3a;letter-spacing:-0.122px;transform:scaleX(0.9669)'>Connection History</div><div class='t' style='left:1201.00px;top:388.00px;font-size:17.5px;line-height:17.5px;font-weight:400;color:#3a3a3a;letter-spacing:-0.060px;transform:scaleX(0.9807)'>Software Inventory</div><div class='t' style='left:1201.00px;top:430.00px;font-size:17.5px;line-height:17.5px;font-weight:400;color:#3a3a3a;letter-spacing:-0.086px;transform:scaleX(0.9743)'>Device Modify</div><div class='t' style='left:1201.00px;top:473.00px;font-size:17.5px;line-height:17.5px;font-weight:400;color:#3a3a3a;letter-spacing:-0.095px;transform:scaleX(0.9631)'>Device Delete</div><div class='t' style='left:1202.00px;top:515.00px;font-size:17.5px;line-height:17.5px;font-weight:400;color:#3a3a3a;letter-spacing:-0.166px;transform:scaleX(0.9506)'>Video Records Delete</div><div class='t' style='left:1201.00px;top:558.00px;font-size:17.5px;line-height:17.5px;font-weight:400;color:#3a3a3a;letter-spacing:-0.027px;transform:scaleX(0.9930)'>Modify Notifications</div>
</body></html>
